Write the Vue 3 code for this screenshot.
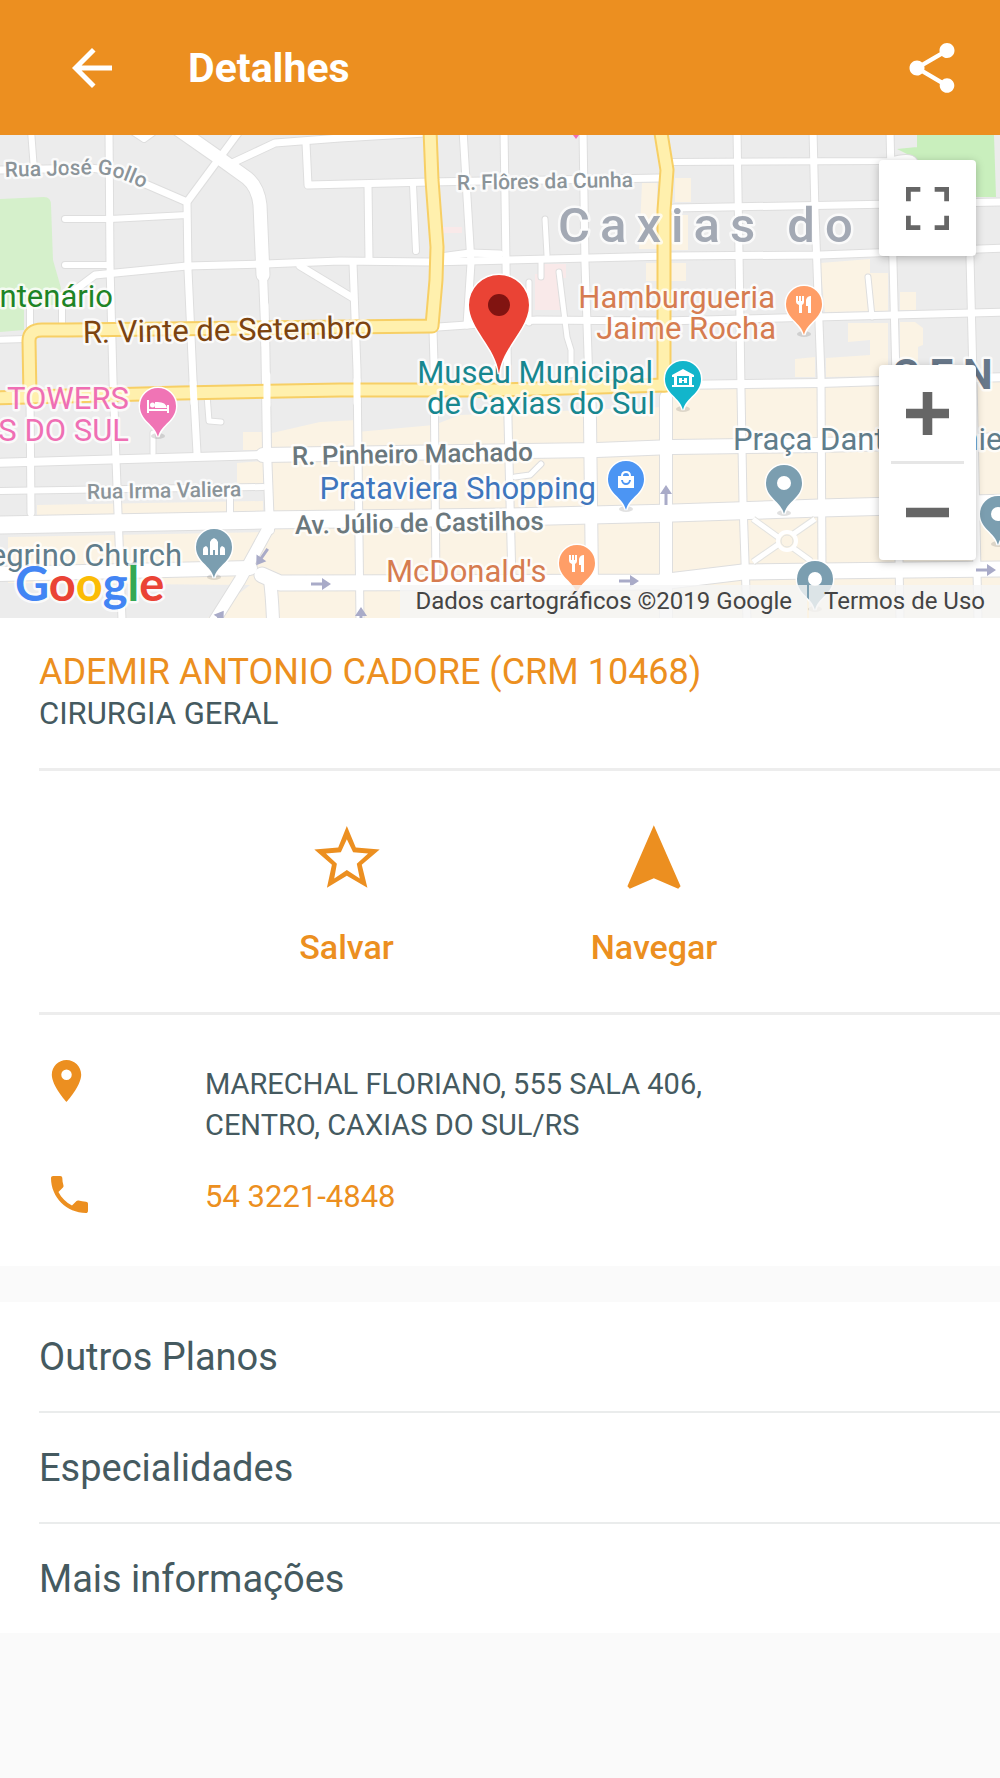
<template>
  <div class="details-page">
    <header class="app-bar">
      <button class="bar-button" type="button" aria-label="Voltar">
        <svg class="icon-back" viewBox="4 4 16 16">
          <path d="M20 11H7.83l5.59-5.59L12 4l-8 8 8 8 1.41-1.41L7.83 13H20v-2z" />
        </svg>
      </button>
      <h1 class="bar-title">Detalhes</h1>
      <button class="bar-button" type="button" aria-label="Compartilhar">
        <svg class="icon-share" viewBox="3 2 18 20">
          <path d="M18 16.08c-.76 0-1.44.3-1.96.77L8.91 12.7c.05-.23.09-.46.09-.7s-.04-.47-.09-.7l7.05-4.11c.54.5 1.25.81 2.04.81 1.66 0 3-1.34 3-3s-1.34-3-3-3-3 1.34-3 3c0 .24.04.47.09.7L8.04 9.81C7.5 9.31 6.79 9 6 9c-1.66 0-3 1.34-3 3s1.34 3 3 3c.79 0 1.5-.31 2.04-.81l7.12 4.16c-.05.21-.08.43-.08.65 0 1.61 1.31 2.92 2.92 2.92s2.92-1.31 2.92-2.92-1.31-2.92-2.92-2.92z" />
        </svg>
      </button>
    </header>

    <section class="map" aria-label="Mapa">
      <svg class="map-canvas" viewBox="0 0 1000 483" preserveAspectRatio="xMidYMid slice">
        <rect width="1000" height="483" fill="#ececec" />

        <!-- Parques e quadras -->
        <path class="park" d="M0 64l44-2q7 0 7 8l2 55 8 28-4 17H24v25l-24 2z" />
        <path class="park-strong" d="M917 0h77l2 62h-79zM897 14l20-2v12z" />
        <path class="clinic" d="M543 129h23v14h-6v32h-25v-36h8zM443 92h19v6h-19z" />
        <path v-for="d in commercial" :key="d" class="commercial" :d="d" />

        <!-- Ruas -->
        <g class="roads">
          <path v-for="road in streets" :key="'c' + road.d" :d="road.d" stroke="#dedede" :stroke-width="road.w + 2" />
          <path v-for="road in streets" :key="'f' + road.d" :d="road.d" stroke="#fff" :stroke-width="road.w" />
          <path v-for="d in avenues" :key="'c' + d" :d="d" stroke="#f7cf65" stroke-width="15" />
          <path v-for="d in avenues" :key="'f' + d" :d="d" stroke="#fff0ad" stroke-width="11" />
          <path :d="crossings" stroke="#fff" stroke-width="7" />
        </g>
        <g>
          <path d="M753 384l58 42M815 384l-62 43" stroke="#e3e3e0" stroke-width="7" />
          <path d="M753 384l58 42M815 384l-62 43" stroke="#fff" stroke-width="5" />
          <circle cx="787" cy="406" r="9" fill="#fbf3e4" stroke="#fff" stroke-width="4" />
          <circle cx="787" cy="406" r="6" fill="none" stroke="#e3e3e0" />
        </g>

        <path
          v-for="arrow in arrows"
          :key="`${arrow.x}-${arrow.y}`"
          class="direction"
          d="M-10-1.500H1V-6L10 0 1 6V1.500H-10z"
          :transform="`translate(${arrow.x} ${arrow.y}) rotate(${arrow.r})`"
        />

        <!-- Nomes -->
        <path id="gollo-curve" d="M5 42L98 39Q118 40 152 58" fill="none" />
        <text class="label street"><textPath href="#gollo-curve">Rua José Gollo</textPath></text>
        <text
          v-for="label in labels"
          :key="label.text"
          class="label"
          :class="label.kind"
          :x="label.x"
          :y="label.y"
          :text-anchor="label.anchor"
          :transform="label.r ? `rotate(${label.r} ${label.x} ${label.y})` : null"
        >{{ label.text }}</text>

        <!-- Pontos de interesse -->
        <g v-for="poi in pois" :key="`${poi.x}-${poi.y}`" :transform="`translate(${poi.x} ${poi.y})`">
          <ellipse cy="30" rx="7" ry="3" fill="#000" opacity=".12" />
          <path class="poi-pin" :fill="poi.color" d="M0 31C-3 18-18 15-18 0A18 18 0 0 1 18 0C18 15 3 18 0 31z" />
          <path v-if="glyphs[poi.type]" :d="glyphs[poi.type]" fill="#fff" fill-rule="evenodd" />
          <circle v-else r="7" fill="#fff" />
        </g>
        <path d="M573 0h6l-3 4z" fill="#f06fb5" />

        <g transform="translate(499 170)">
          <path class="place-pin" d="M0 69C-3 42-30 24-30 0A30 30 0 0 1 30 0C30 24 3 42 0 69z" />
          <circle r="11" fill="#811411" />
        </g>

        <text class="label brand" x="15" y="466">
          <tspan fill="#4285f4">G</tspan><tspan fill="#ea4335">o</tspan><tspan fill="#fbbc05">o</tspan><tspan fill="#4285f4">g</tspan><tspan fill="#34a853">l</tspan><tspan fill="#ea4335">e</tspan>
        </text>
      </svg>

      <button class="map-control fullscreen" type="button" aria-label="Tela cheia">
        <svg viewBox="0 0 18 18">
          <path d="M0 0v6h2V2h4V0H0zm16 0h-4v2h4v4h2V0h-2zm0 16h-4v2h6v-6h-2v4zM2 12H0v6h6v-2H2v-4z" />
        </svg>
      </button>
      <div class="map-control zoom">
        <button type="button" aria-label="Aumentar o zoom">
          <svg viewBox="0 0 18 18"><path d="M7 0h4v7h7v4h-7v7H7v-7H0V7h7z" /></svg>
        </button>
        <span class="zoom-divider"></span>
        <button type="button" aria-label="Diminuir o zoom">
          <svg viewBox="0 0 18 18"><path d="M0 7h18v4H0z" /></svg>
        </button>
      </div>
      <div class="attribution">
        <span>Dados cartográficos ©2019 Google</span>
        <a href="#">Termos de Uso</a>
      </div>
    </section>

    <main>
      <section class="card">
        <div class="provider">
          <h2 class="provider-name">ADEMIR ANTONIO CADORE (CRM 10468)</h2>
          <p class="provider-specialty">CIRURGIA GERAL</p>
        </div>

        <div class="actions">
          <button class="action" type="button">
            <svg viewBox="99 78 199 189">
              <path fill-rule="evenodd" d="M198 79l27 65 72 6-54 46 17 69-62-36-60 36 15-69-53-46 72-6zM198 119l-18 39-45 4 33 31-8 44 38-25 39 25-9-44 34-31-45-4z" />
            </svg>
            <span>Salvar</span>
          </button>
          <button class="action" type="button">
            <svg viewBox="1027 78 189 189">
              <path d="M1121 79l79 180-7 7-72-31-71 31-7-7z" />
            </svg>
            <span>Navegar</span>
          </button>
        </div>

        <div class="contact">
          <div class="contact-row">
            <svg class="icon-place" viewBox="5 2 14 20">
              <path d="M12 2C8.130 2 5 5.130 5 9c0 5.250 7 13 7 13s7-7.750 7-13c0-3.870-3.130-7-7-7zm0 9.500a2.500 2.500 0 0 1 0-5 2.500 2.500 0 0 1 0 5z" />
            </svg>
            <address class="contact-address">
              MARECHAL FLORIANO, 555 SALA 406,<br />CENTRO, CAXIAS DO SUL/RS
            </address>
          </div>
          <div class="contact-row">
            <svg class="icon-phone" viewBox="3 3 18 18">
              <path d="M6.620 10.790c1.440 2.830 3.760 5.140 6.590 6.590l2.200-2.200c.27-.27.67-.36 1.020-.24 1.120.37 2.330.57 3.570.57.55 0 1 .45 1 1V20c0 .55-.45 1-1 1-9.390 0-17-7.610-17-17 0-.55.45-1 1-1h3.500c.55 0 1 .45 1 1 0 1.250.2 2.450.57 3.570.11.35.03.74-.25 1.020l-2.200 2.200z" />
            </svg>
            <a class="contact-phone" href="tel:5432214848">54 3221-4848</a>
          </div>
        </div>
      </section>

      <nav class="menu">
        <button v-for="item in menuItems" :key="item" class="menu-item" type="button">{{ item }}</button>
      </nav>
    </main>
  </div>
</template>

<script setup>
const menuItems = ['Outros Planos', 'Especialidades', 'Mais informações']

// w = largura da rua
const streets = [
  { d: 'M31-5L34 35', w: 6 },
  { d: 'M109-5L110 130 113 245 118 378 122 485', w: 7 },
  { d: 'M-5 35L90 33 115 36 150 51 187 67', w: 7 },
  { d: 'M-5 205L26 204M30 200V168M62 195V160', w: 6 },
  { d: 'M30 262L31 378', w: 7 },
  { d: 'M238-2L187 67 188 135 193 245 197 318', w: 7 },
  { d: 'M132-4L144 4 155-4', w: 6 },
  { d: 'M65 84L110 84 187 80', w: 6 },
  { d: 'M65 130H110', w: 6 },
  { d: 'M75 155L95 140 187 131 265 129 340 126 430 127 670 121 820 120 1005 113', w: 7 },
  { d: 'M440 122L470 118 500 119', w: 7 },
  { d: 'M172-10L222 25 247 43Q258 52 260 70L263 140', w: 13 },
  { d: 'M263 140L265 190 267 315 270 395', w: 8 },
  { d: 'M270 390L240 445 213 488', w: 11 },
  { d: 'M228 30L275 8 340 3 425-2', w: 7 },
  { d: 'M306 8L308 50 430 47 660 43', w: 7 },
  { d: 'M300 131L353 163', w: 7 },
  { d: 'M368 50L369 124', w: 7 },
  { d: 'M413 50L416 116', w: 6 },
  { d: 'M463-5L467 62 471 128 467 190', w: 7 },
  { d: 'M504-5L506 128 508 285 512 448', w: 7 },
  { d: 'M353 128L357 235 360 485', w: 7 },
  { d: 'M433 195L434 228 436 448', w: 7 },
  { d: 'M545 84L547 120', w: 5 },
  { d: 'M541 125V142M529 147V188M559 137L567 202 571 215V240', w: 5 },
  { d: 'M583-5L585 128 589 250', w: 7 },
  { d: 'M589 250L590 285 592 448', w: 12 },
  { d: 'M438 192L537 185 663 186 817 182 1005 177', w: 7 },
  { d: 'M672 27L890 26Q910 20 914 26', w: 6 },
  { d: 'M674 73L1005 67', w: 7 },
  { d: 'M737-5L739 118 741 255 743 368 747 485', w: 7 },
  { d: 'M813-5L815 78 821 242 822 438', w: 7 },
  { d: 'M890-5L893 128 896 242 900 485', w: 7 },
  { d: 'M970 122L973 242 978 485', w: 7 },
  { d: 'M868 142L872 182', w: 5 },
  { d: 'M-5 328L263 320', w: 8 },
  { d: 'M263 320L597 315 673 312 820 310 1005 305', w: 14 },
  { d: 'M-5 356L263 352M230 355V378', w: 6 },
  { d: 'M-5 390L263 385 510 382 673 378 820 373 1005 368', w: 17 },
  { d: 'M-5 439L250 433', w: 14 },
  { d: 'M262 440L280 448 660 447 743 437 820 436 1005 434', w: 15 },
  { d: 'M270 445Q272 460 273 485', w: 12 },
  { d: 'M153 318V298M207 260L209 286 221 287', w: 5 },
  { d: 'M673 250L820 248 1005 242', w: 8 },
  { d: 'M666 262V485', w: 12 },
  { d: 'M515 342L530 340 541 329', w: 5 },
]

const avenues = [
  'M430-5L432 45 437 112 436 145 432 191 67 195 42 195Q29 195 29 206L30 262',
  'M-5 263L180 258 340 255 497 255 666 250',
  'M660-8L667 35 664 75 664 250',
]

// travessas que passam por cima das avenidas
const crossings = 'M265 170V210M193 248L194 268M267 240V270M357 245V268'

const commercial = [
  'M272 298L320 287 357 285V297L434 290 460 280 510 278 663 272V485H205L250 450 8 448V402L268 397 272 350z',
  'M673 252L1000 243V483H673z',
  'M37 370L263 366V378L37 381zM237 328L263 326V350H237zM243 297H265V315H243z',
  'M820 128L870 124V138H888V176L825 177z',
  'M848 188H888V241L826 242V223L870 220V205L848 207z',
  'M900 187H915L923 193V210L918 212V235H900zM795 224L815 222V242H795zM900 157H916V175H900z',
  'M675 43H691V67H675zM671 80H688V115H671zM671 128H686V146H671zM642 48H657V114H639zM646 128H657V146H646z',
]

const arrows = [
  { x: 262, y: 422, r: 125 },
  { x: 321, y: 449, r: 0 },
  { x: 629, y: 446, r: 0 },
  { x: 361, y: 482, r: -90 },
  { x: 666, y: 360, r: -90 },
  { x: 986, y: 435, r: 0 },
  { x: 218, y: 484, r: -55 },
]

const labels = [
  { text: 'R. Flôres da Cunha', x: 457, y: 55, kind: 'street', r: -1 },
  { text: 'Rua Irma Valiera', x: 87, y: 364, kind: 'street', r: -1 },
  { text: 'Caxias do', x: 558, y: 107, kind: 'city' },
  { text: 'CENTRO', x: 892, y: 254, kind: 'district' },
  { text: 'R. Vinte de Setembro', x: 83, y: 208, kind: 'avenue', r: -1 },
  { text: 'R. Pinheiro Machado', x: 292, y: 330, kind: 'road', r: -1 },
  { text: 'Av. Júlio de Castilhos', x: 295, y: 399, kind: 'road', r: -1 },
  { text: 'Centenário', x: 113, y: 172, kind: 'green', anchor: 'end' },
  { text: 'Hamburgueria', x: 775, y: 173, kind: 'food', anchor: 'end' },
  { text: 'Jaime Rocha', x: 776, y: 204, kind: 'food', anchor: 'end' },
  { text: "McDonald's", x: 386, y: 447, kind: 'food' },
  { text: 'Museu Municipal', x: 653, y: 248, kind: 'museum', anchor: 'end' },
  { text: 'de Caxias do Sul', x: 655, y: 279, kind: 'museum', anchor: 'end' },
  { text: 'TOWERS', x: 129, y: 274, kind: 'hotel', anchor: 'end' },
  { text: 'CAXIAS DO SUL', x: 129, y: 306, kind: 'hotel', anchor: 'end' },
  { text: 'Prataviera Shopping', x: 596, y: 364, kind: 'shopping', anchor: 'end' },
  { text: 'São Pelegrino Church', x: 182, y: 431, kind: 'landmark', anchor: 'end' },
  { text: 'Praça Dante Alighieri', x: 733, y: 315, kind: 'landmark' },
]

const pois = [
  { x: 804, y: 169, type: 'food', color: '#ff9e67' },
  { x: 577, y: 428, type: 'food', color: '#ff9e67' },
  { x: 683, y: 244, type: 'museum', color: '#12b5cb' },
  { x: 158, y: 271, type: 'hotel', color: '#f074b5' },
  { x: 214, y: 412, type: 'church', color: '#7b9eb0' },
  { x: 626, y: 344, type: 'shopping', color: '#4c95f3' },
  { x: 784, y: 348, type: 'dot', color: '#7b9eb0' },
  { x: 815, y: 444, type: 'dot', color: '#7b9eb0' },
  { x: 998, y: 379, type: 'dot', color: '#7b9eb0' },
]

const glyphs = {
  food: 'M-8-8h2v5h1v-5h2v5h1v-5h2v6q0 2-2 3v8h-3V1q-3-1-3-3zM7-8v17H4V2H2v-6q1-4 5-4z',
  museum: 'M0-10L11-4V-2H9V6h2V8H-11V6h2V-2h-2V-4zM-6-3V6H6V-3zM-4-1h3v2h2v-2h3v5H1V2h-2v2h-3z',
  hotel: 'M-11-6h2V3H9V-1h2V7H9V5H-9V7h-2zM-3-4Q8-5 9 2H-3zM-8-1a2.500 2.500 0 1 0 5 0a2.500 2.500 0 1 0-5 0z',
  church: 'M-4 8V-5Q-3-8 0-9Q3-8 4-5V8H1V3H-1V8zM-11 8V2Q-11 0-8-1Q-6 0-6 2V8zM6 8V2Q6 0 8-1Q11 0 11 2V8z',
  shopping: 'M-8-3h3q0-5 5-5t5 5h3V9H-8zM-3-3H3Q3-6 0-6T-3-3zM-5 1q1 5 5 5t5-5H3Q3 4 0 4T-3 1z',
}
</script>

<style>
body {
  margin: 0;
  background: #fafafa;
}
</style>

<style scoped>
.details-page {
  font-family: Roboto, "Liberation Sans", sans-serif;
  color: #455a60;
  background: #fafafa;
}

button {
  margin: 0;
  padding: 0;
  border: 0;
  background: none;
  color: inherit;
  font: inherit;
  cursor: pointer;
}

svg {
  display: block;
}

/* Barra superior */
.app-bar {
  display: flex;
  align-items: center;
  height: 135px;
  padding: 0 45px 0 72px;
  box-sizing: border-box;
  background: #ec8f20;
  color: #fff;
}

.bar-button svg {
  fill: currentColor;
}

.icon-back {
  width: 40px;
  height: 40px;
}

.icon-share {
  width: 46px;
  height: 50px;
}

.bar-title {
  flex: 1;
  margin: 0;
  padding-left: 76px;
  font-size: 41px;
  line-height: 48px;
  font-weight: 700;
}

/* Mapa */
.map {
  position: relative;
  height: 483px;
  overflow: hidden;
}

.map-canvas {
  width: 100%;
  height: 100%;
}

.roads path {
  fill: none;
  stroke-linecap: round;
  stroke-linejoin: round;
}

.park {
  fill: #d5f0cb;
}

.park-strong {
  fill: #c9efbd;
}

.clinic {
  fill: #f9e9e9;
}

.commercial {
  fill: #fbf3e4;
}

.direction {
  fill: #a9abc8;
}

.poi-pin,
.place-pin {
  stroke: #fff;
  stroke-width: 3px;
  paint-order: stroke;
}

.place-pin {
  fill: #ea4335;
}

.label {
  font-size: 31px;
  stroke: rgba(255, 255, 255, 0.75);
  stroke-width: 5px;
  stroke-linejoin: round;
  paint-order: stroke;
}

.street {
  font-size: 21px;
  font-weight: 500;
  fill: #8b9499;
}

.road {
  font-size: 26px;
  font-weight: 500;
  fill: #6b787d;
}

.city {
  font-size: 49px;
  font-weight: 500;
  letter-spacing: 10px;
  fill: #a3a9b4;
}

.district {
  font-size: 42px;
  font-weight: 700;
  letter-spacing: 10px;
  fill: #68788a;
}

.avenue {
  fill: #7c430f;
}

.green {
  fill: #1e8426;
}

.food {
  fill: #d67c50;
}

.museum {
  fill: #17878f;
}

.hotel {
  fill: #ef6fb4;
}

.shopping {
  fill: #3f76bd;
}

.landmark {
  fill: #607d8b;
}

.brand {
  font-family: Lato, sans-serif;
  font-size: 47px;
  font-weight: 700;
}

.map-control {
  position: absolute;
  right: 24px;
  width: 97px;
  border-radius: 4px;
  background: #fff;
  box-shadow: 0 2px 8px rgba(0, 0, 0, 0.25);
}

.map-control svg {
  width: 43px;
  height: 43px;
  margin: auto;
  fill: #666;
}

.fullscreen {
  top: 25px;
  height: 96px;
}

.zoom {
  top: 230px;
  display: flex;
  flex-direction: column;
}

.zoom button {
  height: 96px;
}

.zoom-divider {
  height: 3px;
  margin: 0 12px;
  background: #e6e6e6;
}

.attribution {
  position: absolute;
  right: 0;
  bottom: 0;
  display: flex;
  gap: 2px;
  font-size: 24px;
  line-height: 33px;
  color: #444;
}

.attribution span,
.attribution a {
  padding: 0 15px;
  background: rgba(245, 245, 245, 0.8);
  color: inherit;
  text-decoration: none;
}

/* Dados do prestador */
.card {
  padding-left: 39px;
  background: #fff;
}

.provider {
  padding: 32px 0 34px;
  border-bottom: 3px solid #ededed;
}

.provider-name {
  margin: 0;
  font-size: 36px;
  line-height: 44px;
  font-weight: 400;
  color: #ec8f20;
}

.provider-specialty {
  margin: 0;
  font-size: 31px;
  line-height: 40px;
}

.actions {
  display: grid;
  grid-template-columns: 1fr 1fr;
  padding: 54px 20% 45px 16%;
  border-bottom: 3px solid #ededed;
}

.action {
  display: flex;
  flex-direction: column;
  align-items: center;
  gap: 38px;
  color: #ec8f20;
  font-size: 34px;
  line-height: 40px;
  font-weight: 500;
}

.action svg {
  width: 66px;
  height: 64px;
  fill: currentColor;
}

.contact {
  display: flex;
  flex-direction: column;
  gap: 30px;
  padding: 45px 12px 48px;
}

.contact-row {
  display: grid;
  grid-template-columns: 154px 1fr;
  align-items: start;
}

.contact-row svg {
  fill: #ec8f20;
}

.icon-place {
  width: 31px;
  height: 42px;
}

.icon-phone {
  width: 37px;
  height: 37px;
}

.contact-address {
  padding-top: 4px;
  font-size: 29px;
  line-height: 41px;
  font-style: normal;
}

.contact-phone {
  font-size: 31px;
  line-height: 42px;
  color: #ec8f20;
  text-decoration: none;
}

/* Lista de opções */
.menu {
  display: flex;
  flex-direction: column;
  margin-top: 36px;
  padding-left: 39px;
  background: #fff;
}

.menu-item {
  height: 111px;
  border-bottom: 2px solid #eaecec;
  font-size: 38px;
  text-align: left;
}

.menu-item:last-child {
  height: 109px;
  border-bottom: 0;
}
</style>
